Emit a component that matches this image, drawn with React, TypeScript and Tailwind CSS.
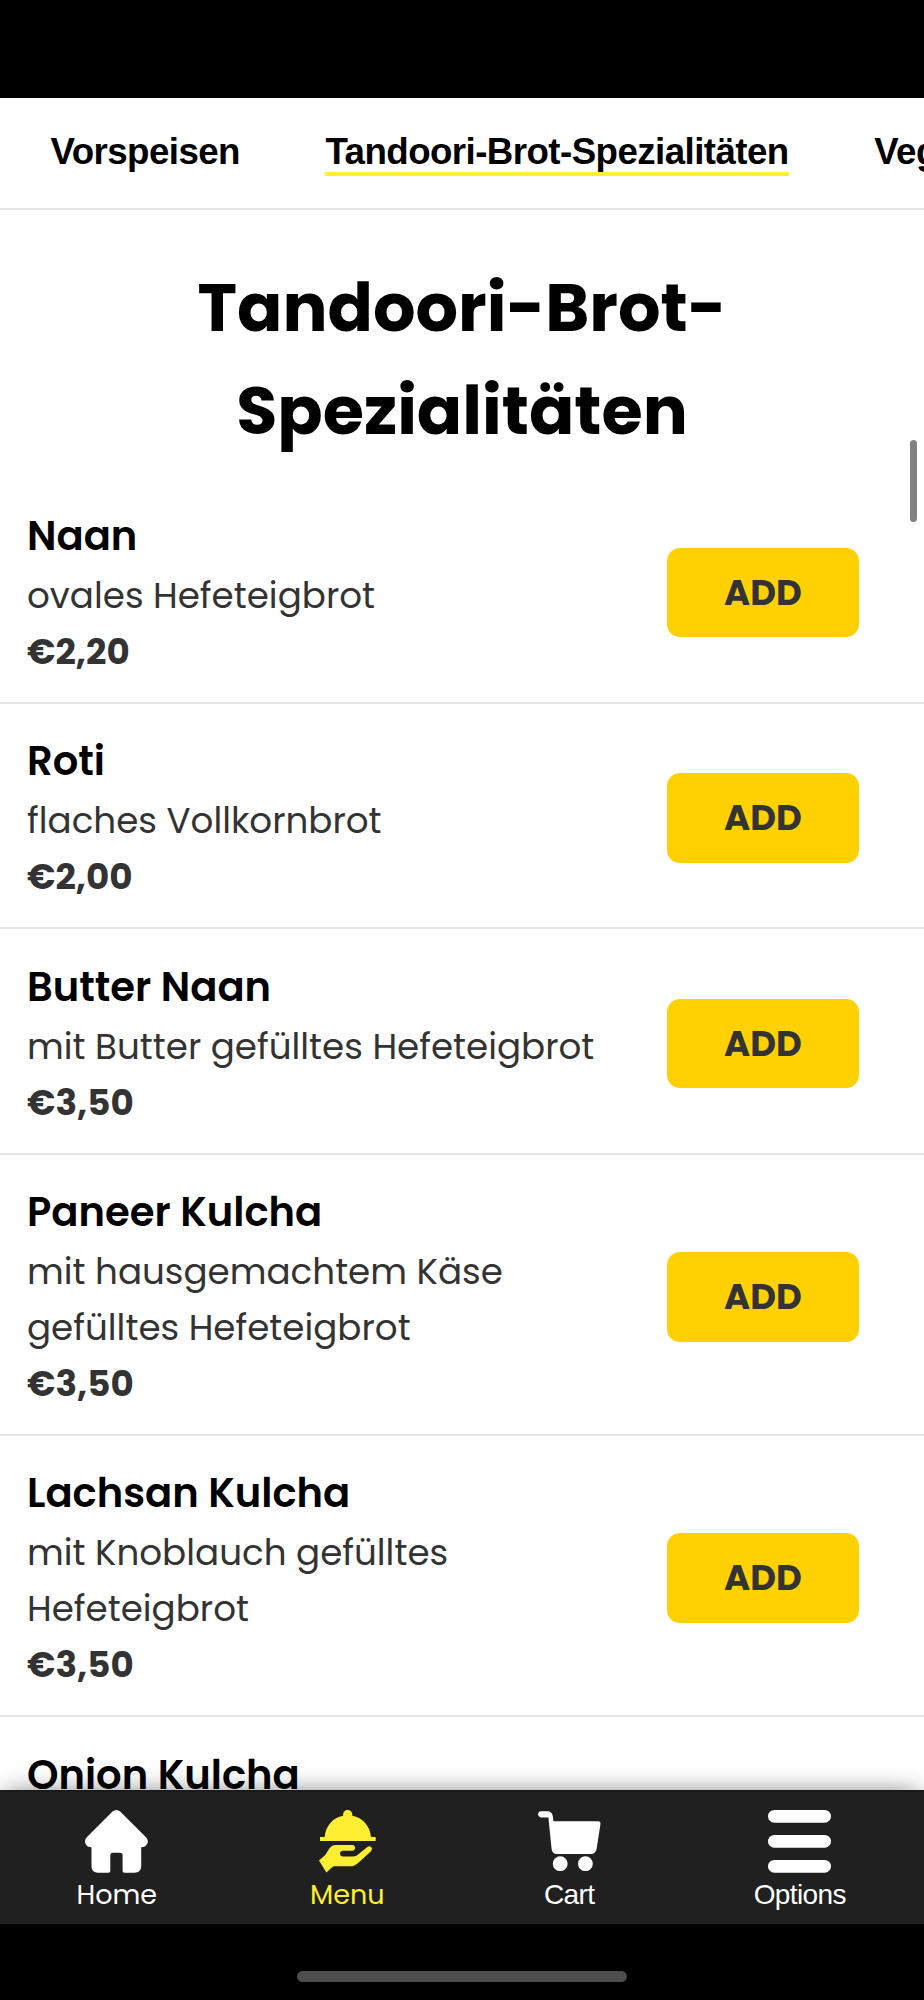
import type { ReactNode } from 'react';

type Dish = { name: string; description: string; price: string };

const dishes: Dish[] = [
  { name: 'Naan', description: 'ovales Hefeteigbrot', price: '€2,20' },
  { name: 'Roti', description: 'flaches Vollkornbrot', price: '€2,00' },
  { name: 'Butter Naan', description: 'mit Butter gefülltes Hefeteigbrot', price: '€3,50' },
  { name: 'Paneer Kulcha', description: 'mit hausgemachtem Käse gefülltes Hefeteigbrot', price: '€3,50' },
  { name: 'Lachsan Kulcha', description: 'mit Knoblauch gefülltes Hefeteigbrot', price: '€3,50' },
  { name: 'Onion Kulcha', description: 'mit Zwiebeln gefülltes Hefeteigbrot', price: '€3,50' },
];

function HomeIcon() {
  return (
    <svg width="63" height="63" viewBox="0 0 63 63" fill="currentColor">
      <path d="M27.5 1.6Q31.3-1.5 35.2 1.6L61 27.2Q63.6 30 62.6 33Q61 37.2 56.2 37.2V56Q56 62.8 49.5 62.8H39.5Q37.6 62.8 37.6 61V45.5Q37.6 42.7 35 42.7H28Q25.3 42.7 25.3 45.5V61Q25.3 62.8 23.5 62.8H13Q6.5 62.8 6.5 56V37.2Q1.5 37.2 .2 33Q-.7 30 1.8 27.2Z" />
    </svg>
  );
}

function MenuIcon() {
  return (
    <svg width="57" height="63" viewBox="0 0 57 63" fill="currentColor">
      <path d="M1 27H5.7C6.5 16 14 7.6 24.1 5.8V4.5A4.6 4.6 0 0 1 33.3 4.5V5.8C43.5 7.6 51.2 16 52 27H56.7V31H1Z" />
      <path d="M0 50.6L6 45.2C7.5 43.5 8.8 40.8 10.2 38.8C11.8 36.3 13.8 35 16.8 35H33.3C37 35 37 40.7 33.3 40.7H24C20 40.7 20 46.5 24 46.5H34.5C36.2 46.5 37.4 45.9 38.8 44.8L48.4 37C51.3 34.8 54.6 38.5 52 41.3L38.8 53.2C36.5 55.3 34.3 56.3 31.2 56.3H16.2C14.8 56.3 13.8 56.7 12.8 57.5L7.4 62.5Z" />
    </svg>
  );
}

function CartIcon() {
  return (
    <svg width="63" height="63" viewBox="0 0 63 63" fill="currentColor">
      <path d="M3 1.3H9.5C13 1.3 14.6 3.8 14.9 7L15.4 11.3H60.3Q62.7 11.3 62.5 13.8L58.6 39Q57.6 44 52.8 44H19Q14.2 44 13.6 39L10.4 7.4H3C-.9 7.4-.9 1.3 3 1.3Z" />
      <circle cx="22.2" cy="53.7" r="7.4" />
      <circle cx="47.4" cy="53.7" r="7.4" />
    </svg>
  );
}

function OptionsIcon() {
  return (
    <svg width="63" height="63" viewBox="0 0 63 63" fill="currentColor">
      <rect y="0" width="63" height="12.7" rx="6.35" />
      <rect y="25" width="63" height="12.7" rx="6.35" />
      <rect y="50" width="63" height="12.7" rx="6.35" />
    </svg>
  );
}

function NavItem({ icon, className, children }: { icon: ReactNode; className: string; children: ReactNode }) {
  return (
    <a className={`flex flex-col items-center pt-[18px] ${className}`}>
      {icon}
      <span className="mt-[3px] leading-[38px]">{children}</span>
    </a>
  );
}

function DishRow({ dish }: { dish: Dish }) {
  return (
    <li className="flex items-center justify-between border-b-2 border-[#e5e5e5] pt-[27.4px] pr-[65px] pb-[22.6px] pl-[27px]">
      <div className="w-[600px] text-[35.7px] leading-[55.75px] text-[#333]">
        <h2 className="mb-px text-[40.1px] leading-[61px] font-semibold text-black">{dish.name}</h2>
        <p>{dish.description}</p>
        <p className="font-bold">{dish.price}</p>
      </div>
      <button className="h-[89.3px] w-[192px] shrink-0 rounded-[13px] bg-[#ffd103] text-[35.5px] font-bold text-[#333]">
        ADD
      </button>
    </li>
  );
}

export default function App() {
  return (
    <div className="relative flex h-[2000px] w-[924px] flex-col overflow-hidden bg-black font-['Poppins','Inter',sans-serif]">
      <div className="h-[98px] shrink-0" />
      <header className="flex h-[112px] shrink-0 items-start gap-[85.5px] overflow-hidden border-b-2 border-[#e5e5e5] bg-white pt-[33px] pl-[50.5px] font-['Liberation_Sans',sans-serif] text-[36.7px] leading-[41px] font-bold tracking-[-0.56px] whitespace-nowrap text-black">
        <span>Vorspeisen</span>
        <span className="border-b-4 border-[#ffee32]">Tandoori-Brot-Spezialitäten</span>
        <span>Vegetarisch</span>
      </header>

      <main className="min-h-0 flex-1 overflow-hidden bg-white pt-[47px]">
        <h1 className="mb-[16px] text-center text-[66.9px] leading-[102.7px] font-bold text-black">
          Tandoori-Brot-
          <br />
          Spezialitäten
        </h1>
        <ul>
          {dishes.map((dish) => (
            <DishRow key={dish.name} dish={dish} />
          ))}
        </ul>
      </main>

      <nav className="z-10 flex h-[134px] shrink-0 justify-around border-t-2 border-[#191b1a] bg-[#202020] pr-[1.5px] text-[27px] text-white shadow-[0_-2px_24px_-6px_rgba(0,0,0,0.6)]">
        <NavItem icon={<HomeIcon />} className="">Home</NavItem>
        <NavItem icon={<MenuIcon />} className="text-[#ffee32]">Menu</NavItem>
        <NavItem icon={<CartIcon />} className="font-['Liberation_Sans',sans-serif] text-[28px] tracking-[-0.6px]">Cart</NavItem>
        <NavItem icon={<OptionsIcon />} className="font-['Liberation_Sans',sans-serif] text-[28px] tracking-[-0.6px]">Options</NavItem>
      </nav>
      <footer className="z-10 flex h-[76px] shrink-0 justify-center bg-black pt-[47px]">
        <div className="h-[11px] w-[330px] rounded-full bg-[#4d4d4d]" />
      </footer>

      <div className="absolute top-[440px] left-[910px] h-[82px] w-[7px] rounded-full bg-[#808080]" />
    </div>
  );
}
